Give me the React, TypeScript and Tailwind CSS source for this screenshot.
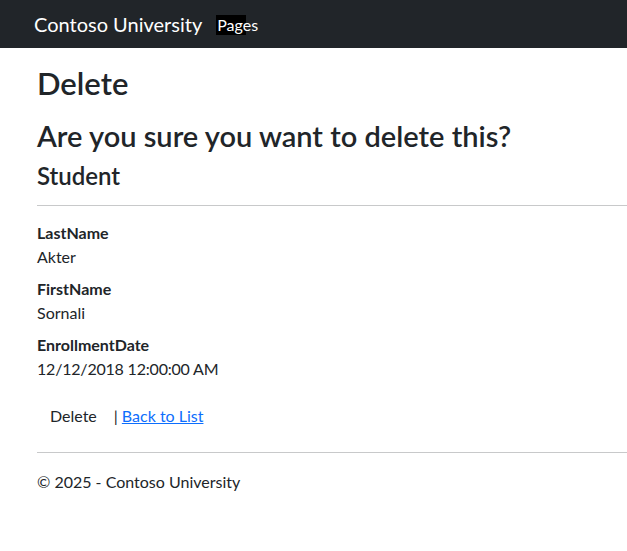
export default function App() {
  return (
    <div className="min-h-screen bg-white text-[#212529] font-['Lato',sans-serif]">
      <nav className="h-12 bg-[#212529] flex items-center pl-[34px]">
        <span className="text-[20px] leading-none text-white">Contoso University</span>
        <span className="ml-[14px] mt-[1px] inline-block w-[30px] h-5 bg-black text-white text-[16px] leading-5 pl-[1px] whitespace-nowrap">
          Pages
        </span>
      </nav>

      <main className="pl-[37px]">
        <h1 className="mt-[17px] mb-4 text-[31px] leading-[37px] font-semibold">Delete</h1>
        <h3 className="text-[29px] leading-[36px] font-semibold">Are you sure you want to delete this?</h3>

        <div>
          <h4 className="mt-[7px] text-[24px] leading-[29px] font-semibold">Student</h4>
          <hr className="mt-[15px] border-t border-[#c8c9ca]" />
          <dl className="mt-[15px] mb-4 text-[16px] leading-6">
            <dt className="font-bold">LastName</dt>
            <dd className="mb-2">Akter</dd>
            <dt className="font-bold">FirstName</dt>
            <dd className="mb-2">Sornali</dd>
            <dt className="font-bold">EnrollmentDate</dt>
            <dd className="tracking-[-0.2px]">12/12/2018 12:00:00 AM</dd>
          </dl>
        </div>

        <form className="flex items-baseline text-[16px] leading-6">
          <button type="button" className="px-3 py-[6px] border border-transparent rounded">
            Delete
          </button>
          <span className="ml-1">|</span>
          <a href="#" className="ml-1 text-[#0d6efd] underline">
            Back to List
          </a>
        </form>
      </main>

      <footer className="mt-[17px] ml-[37px] border-t border-[#c8c9ca] pt-[17px] text-[16px] leading-6">
        © 2025 - Contoso University
      </footer>
    </div>
  );
}
